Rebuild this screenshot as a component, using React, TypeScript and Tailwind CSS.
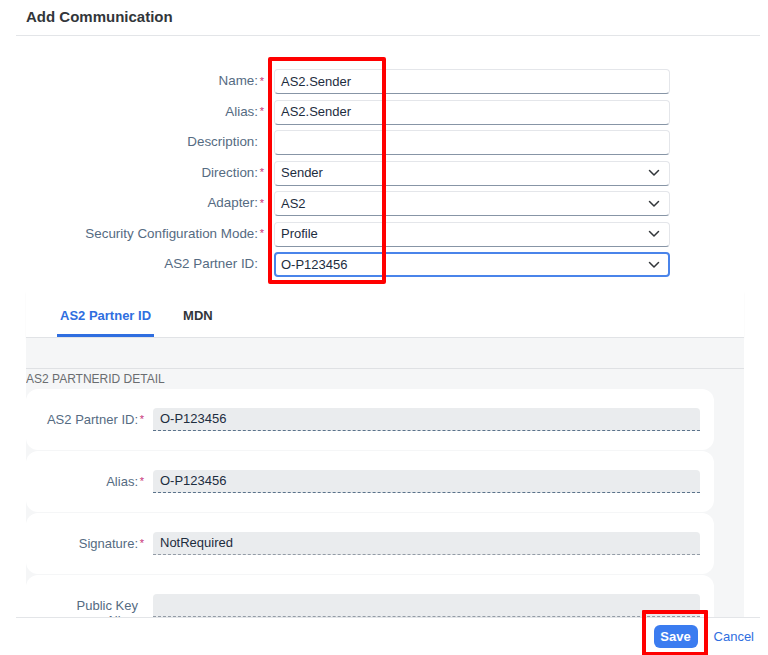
import React from "react";

const Chevron = () => (
  <svg width="12" height="8" viewBox="0 0 12 8" fill="none">
    <path d="M1.5 1.5 L6 6 L10.5 1.5" stroke="#32363a" strokeWidth="1.5" strokeLinecap="round" strokeLinejoin="round" />
  </svg>
);

type Row = { label: string; req: boolean; value: string; select?: boolean; focus?: boolean };

const rows: Row[] = [
  { label: "Name:", req: true, value: "AS2.Sender" },
  { label: "Alias:", req: true, value: "AS2.Sender" },
  { label: "Description:", req: false, value: "" },
  { label: "Direction:", req: true, value: "Sender", select: true },
  { label: "Adapter:", req: true, value: "AS2", select: true },
  { label: "Security Configuration Mode:", req: true, value: "Profile", select: true },
  { label: "AS2 Partner ID:", req: false, value: "O-P123456", select: true, focus: true },
];

export default function App() {
  return (
    <div className="relative w-[768px] h-[655px] bg-white flex flex-col overflow-hidden font-['Liberation_Sans',Arial,sans-serif] text-[13px]">
      {/* Header */}
      <div className="ml-4 mr-[8px] h-[36px] shrink-0 border-b border-[#e3e5e8] flex items-center pl-[10px]">
        <span className="text-[15px] font-bold text-[#32363a]">Add Communication</span>
      </div>

      {/* Top form */}
      <div className="flex flex-col gap-[5.5px] pt-[33px] shrink-0">
        {rows.map((r) => (
          <div key={r.label} className="flex items-center h-[25px]">
            <div className="w-[274px] pr-[8px] flex justify-end items-center text-[#556b82] text-[13.4px]">
              <span className="whitespace-nowrap">{r.label}</span>
              <span className="w-[8px] text-center text-[#c8347a] text-[11px] leading-none">{r.req ? "*" : ""}</span>
            </div>
            <div
              className={
                r.focus
                  ? "w-[396px] h-[25px] rounded-[4px] border-2 border-[#4a84ea] bg-white flex items-center pl-[5px] pr-[8px] text-[#1d2d3e]"
                  : "w-[396px] h-[25px] rounded-[4px] border border-[#e4e6ea] border-b-[#8795a6] bg-white flex items-center pl-[6px] pr-[9px] text-[#1d2d3e]"
              }
            >
              <span className="flex-1">{r.value}</span>
              {r.select && <Chevron />}
            </div>
          </div>
        ))}
      </div>

      {/* Tab panel */}
      <div className="ml-[26px] w-[718px] mt-[15px] flex-1 min-h-0 flex flex-col">
        <div className="h-[46px] shrink-0 bg-white border-b border-[#e1e3e6] shadow-[0_1px_2px_rgba(0,0,0,0.04)] flex items-stretch pl-[31px]">
          <div className="flex items-center pt-[6px] px-[3px] border-b-[3px] border-[#2f6ee0] text-[#2f6ee0] font-bold">
            AS2 Partner ID
          </div>
          <div className="flex items-center pt-[6px] ml-[26px] px-[3px] border-b-[3px] border-transparent text-[#32363a] font-bold">
            MDN
          </div>
        </div>
        <div className="flex-1 min-h-0 bg-[#f5f6f7] overflow-hidden flex flex-col">
          <div className="h-[31px] shrink-0 border-b border-[#dfe1e4]" />
          <div className="text-[12px] leading-[16px] text-[#6a6d70] mt-[2px]">AS2 PARTNERID DETAIL</div>
          <div className="flex flex-col gap-[1px] mt-[2px] w-[688px]">
            {[
              { l: "AS2 Partner ID:", req: true, v: "O-P123456", dark: true },
              { l: "Alias:", req: true, v: "O-P123456", dark: true },
              { l: "Signature:", req: true, v: "NotRequired", dark: false },
              { l: "Public Key|Alias:", req: false, v: "", dark: false },
            ].map((c) => (
              <div key={c.l} className="h-[61px] shrink-0 bg-white rounded-[12px] flex items-start pt-[19px]">
                <div className="w-[120px] flex justify-end items-start text-[#556b82] pt-[4px] leading-[15px]">
                  <span className="text-right whitespace-nowrap">
                    {c.l.includes("|") ? (
                      <>
                        {c.l.split("|")[0]}
                        <br />
                        {c.l.split("|")[1]}
                      </>
                    ) : (
                      c.l
                    )}
                  </span>
                  <span className="w-[8px] text-center text-[#c8347a] text-[11px] leading-[15px]">{c.req ? "*" : ""}</span>
                </div>
                <div
                  className={
                    c.dark
                      ? "ml-[7px] w-[547px] h-[23px] rounded-t-[4px] bg-[#eaecee] border-b border-dashed border-[#5b738b] flex items-center pl-[7px] text-[#1d2d3e]"
                      : "ml-[7px] w-[547px] h-[23px] rounded-t-[4px] bg-[#eaecee] border-b border-dashed border-[#939ca6] flex items-center pl-[7px] text-[#1d2d3e]"
                  }
                >
                  {c.v}
                </div>
              </div>
            ))}
          </div>
        </div>
      </div>

      {/* Footer */}
      <div className="ml-4 mr-[8px] h-[38px] shrink-0 border-t border-[#e3e5e8] flex items-center justify-end pr-[6px]">
        <button className="w-[44px] h-[23px] rounded-[6px] bg-[#3b7cf0] text-white font-bold text-[13px] flex items-center justify-center">
          Save
        </button>
        <span className="ml-[16px] text-[#2f6ee0]">Cancel</span>
      </div>

      {/* Annotation overlays */}
      <div className="absolute left-[268px] top-[57px] w-[118px] h-[227px] border-4 border-[#ff0000] rounded-[2px] pointer-events-none" />
      <div className="absolute left-[642px] top-[610px] w-[66px] h-[46px] border-4 border-[#ff0000] rounded-[1px] pointer-events-none" />
    </div>
  );
}
